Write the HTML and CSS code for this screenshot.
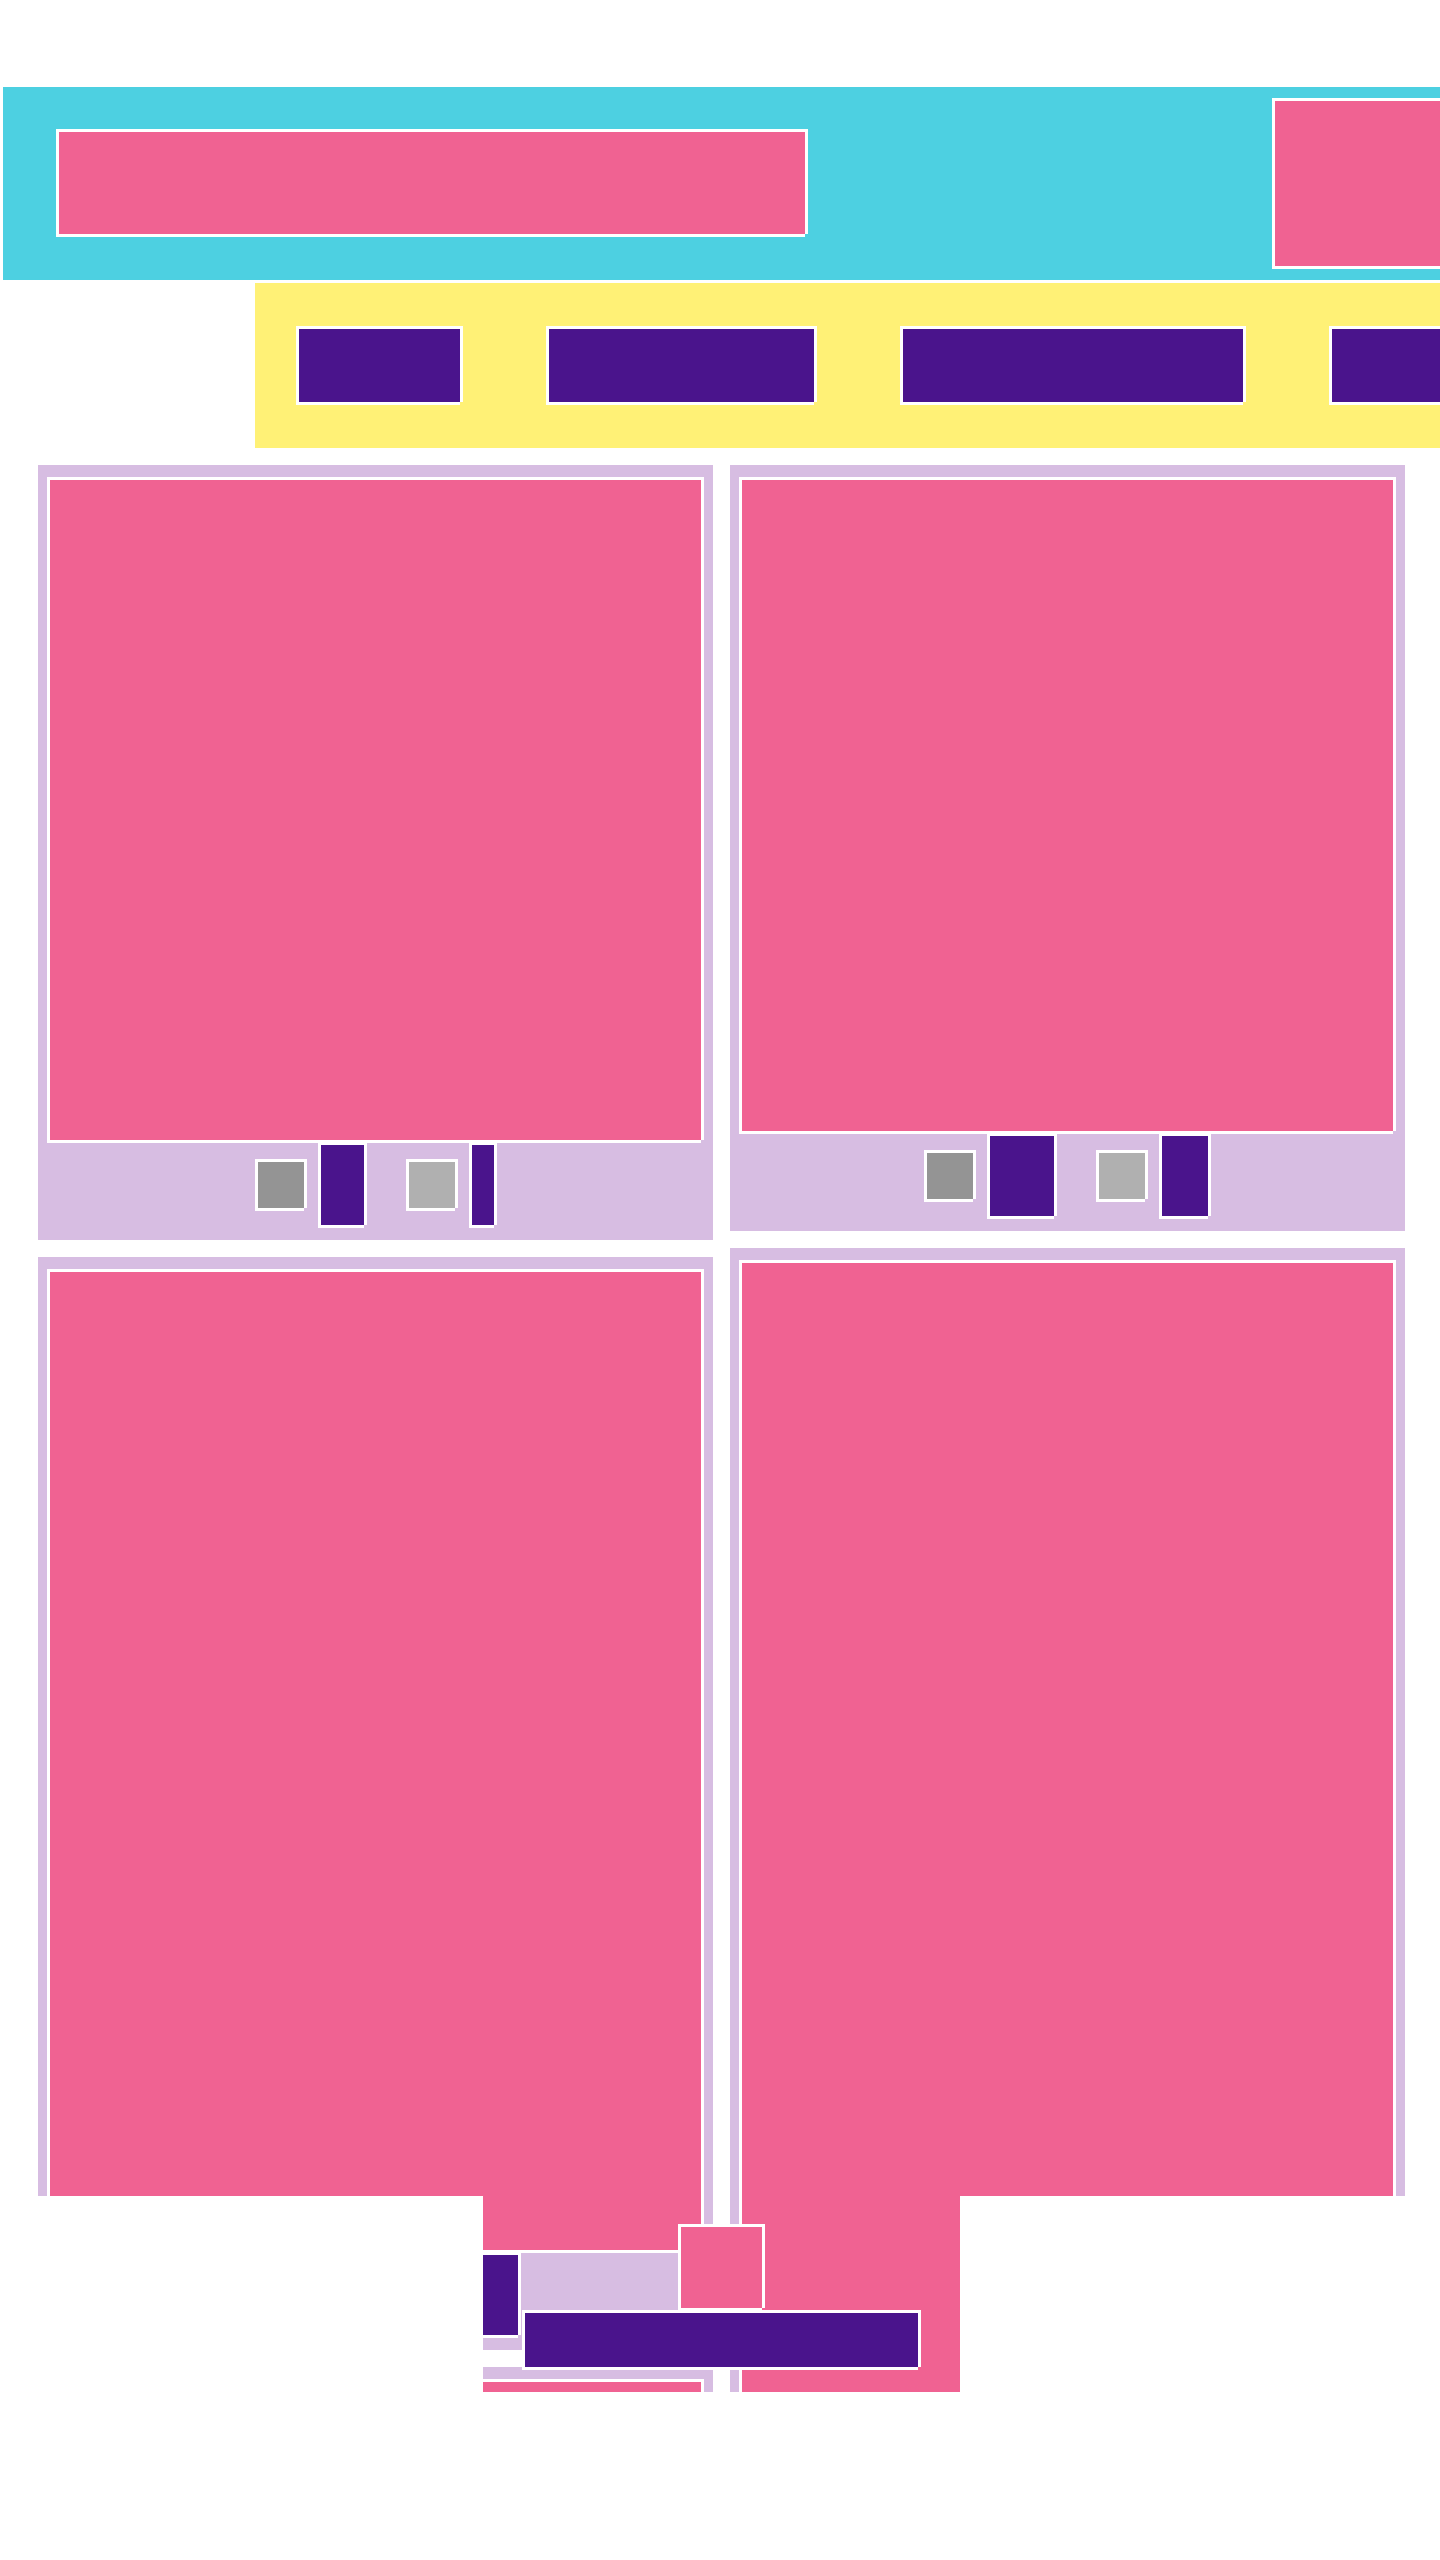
FILE: index.html
```html
<!DOCTYPE html>
<html lang="en">
<head>
<meta charset="utf-8">
<title>Layout</title>
<link rel="stylesheet" href="styles.css">
</head>
<body>
<div class="page">
  <header class="hdr">
    <div class="blk pink logo"></div>
    <div class="blk pink hdr-side"></div>
  </header>

  <nav class="nav">
    <div class="blk purple nav-item w1"></div>
    <div class="blk purple nav-item w2"></div>
    <div class="blk purple nav-item w3"></div>
    <div class="blk purple nav-item w4"></div>
  </nav>

  <main class="grid">
    <div class="col">
      <article class="card">
        <div class="blk pink media h663"></div>
        <div class="controls">
          <span class="blk gray1 sq"></span>
          <span class="blk purple tall" style="width:46px"></span>
          <span class="blk gray2 sq gap-l"></span>
          <span class="blk purple tall" style="width:25px"></span>
        </div>
      </article>
      <article class="card">
        <div class="blk pink media h981"></div>
        <div class="controls">
          <span class="blk gray1 sq"></span>
          <span class="blk purple tall" style="width:60px"></span>
          <span class="blk gray2 sq gap-l"></span>
          <span class="blk purple tall" style="width:60px"></span>
        </div>
      </article>
      <article class="card">
        <div class="blk pink media h900"></div>
      </article>
    </div>
    <div class="col">
      <article class="card">
        <div class="blk pink media h654"></div>
        <div class="controls">
          <span class="blk gray1 sq"></span>
          <span class="blk purple tall" style="width:67px"></span>
          <span class="blk gray2 sq gap-l"></span>
          <span class="blk purple tall" style="width:49px"></span>
        </div>
      </article>
      <article class="card">
        <div class="blk pink media h1300"></div>
      </article>
    </div>
  </main>

  <div class="float">
    <div class="blk pink float-icon"></div>
    <div class="blk purple float-bar"></div>
  </div>
</div>
</body>
</html>
```

FILE: styles.css
```css
html, body {
  margin: 0;
  padding: 0;
  background: #ffffff;
  overflow: hidden;
  font-family: "Liberation Sans", Arial, sans-serif;
}

.page {
  position: relative;
  box-sizing: border-box;
  width: 1440px;
  height: 2560px;
  overflow: hidden;
  padding-top: 87px;
  clip-path: polygon(0 0, 1440px 0, 1440px 2196px, 960px 2196px, 960px 2392px, 483px 2392px, 483px 2196px, 0 2196px);
}

.blk {
  box-sizing: border-box;
  border-top: 3px solid #ffffff;
  border-left: 3px solid #ffffff;
  box-shadow: 3px 0 0 #ffffff, 0 3px 0 #ffffff;
  flex-shrink: 0;
}

.pink { background: #f06292; }
.purple { background: #4a148c; }
.gray1 { background: #949494; }
.gray2 { background: #b0b0b0; }

/* header */
.hdr {
  display: flex;
  align-items: flex-start;
  box-sizing: border-box;
  width: 1700px;
  height: 193px;
  margin-left: 3px;
  padding-left: 53px;
  background: #4dd0e1;
}
.logo {
  width: 749px;
  height: 105px;
  margin-top: 42px;
}
.hdr-side {
  width: 300px;
  height: 168px;
  margin-top: 11px;
  margin-left: 467px;
}

/* nav */
.nav {
  display: flex;
  align-items: flex-start;
  gap: 86px;
  box-sizing: border-box;
  width: 1500px;
  height: 165px;
  margin: 3px 0 0 255px;
  padding: 43px 0 0 41px;
  background: #fff176;
}
.nav-item { height: 76px; }
.w1 { width: 164px; }
.w2 { width: 268px; }
.w3 { width: 343px; }
.w4 { width: 220px; }

/* cards */
.grid {
  display: flex;
  align-items: flex-start;
  gap: 17px;
  margin: 17px 0 0 38px;
}
.col {
  display: flex;
  flex-direction: column;
  gap: 17px;
  width: 675px;
}
.card {
  box-sizing: border-box;
  width: 675px;
  padding: 12px 12px 0 9px;
  background: #d7bde2;
}
.media { width: 654px; }
.h663 { height: 663px; }
.h654 { height: 654px; }
.h981 { height: 981px; }
.h900 { height: 900px; }
.h1300 { height: 1300px; }

.controls {
  display: flex;
  justify-content: center;
  align-items: center;
  gap: 14px;
  padding: 2px 0 15px;
}
.sq {
  width: 49px;
  height: 49px;
}
.tall { height: 83px; }
.gap-l { margin-left: 28px; }

/* floating widget */
.float {
  position: absolute;
  top: 2224px;
  left: 0;
  width: 1440px;
  display: flex;
  flex-direction: column;
  align-items: center;
  gap: 2px;
}
.float-icon {
  width: 84px;
  height: 84px;
}
.float-bar {
  width: 396px;
  height: 57px;
}
```
